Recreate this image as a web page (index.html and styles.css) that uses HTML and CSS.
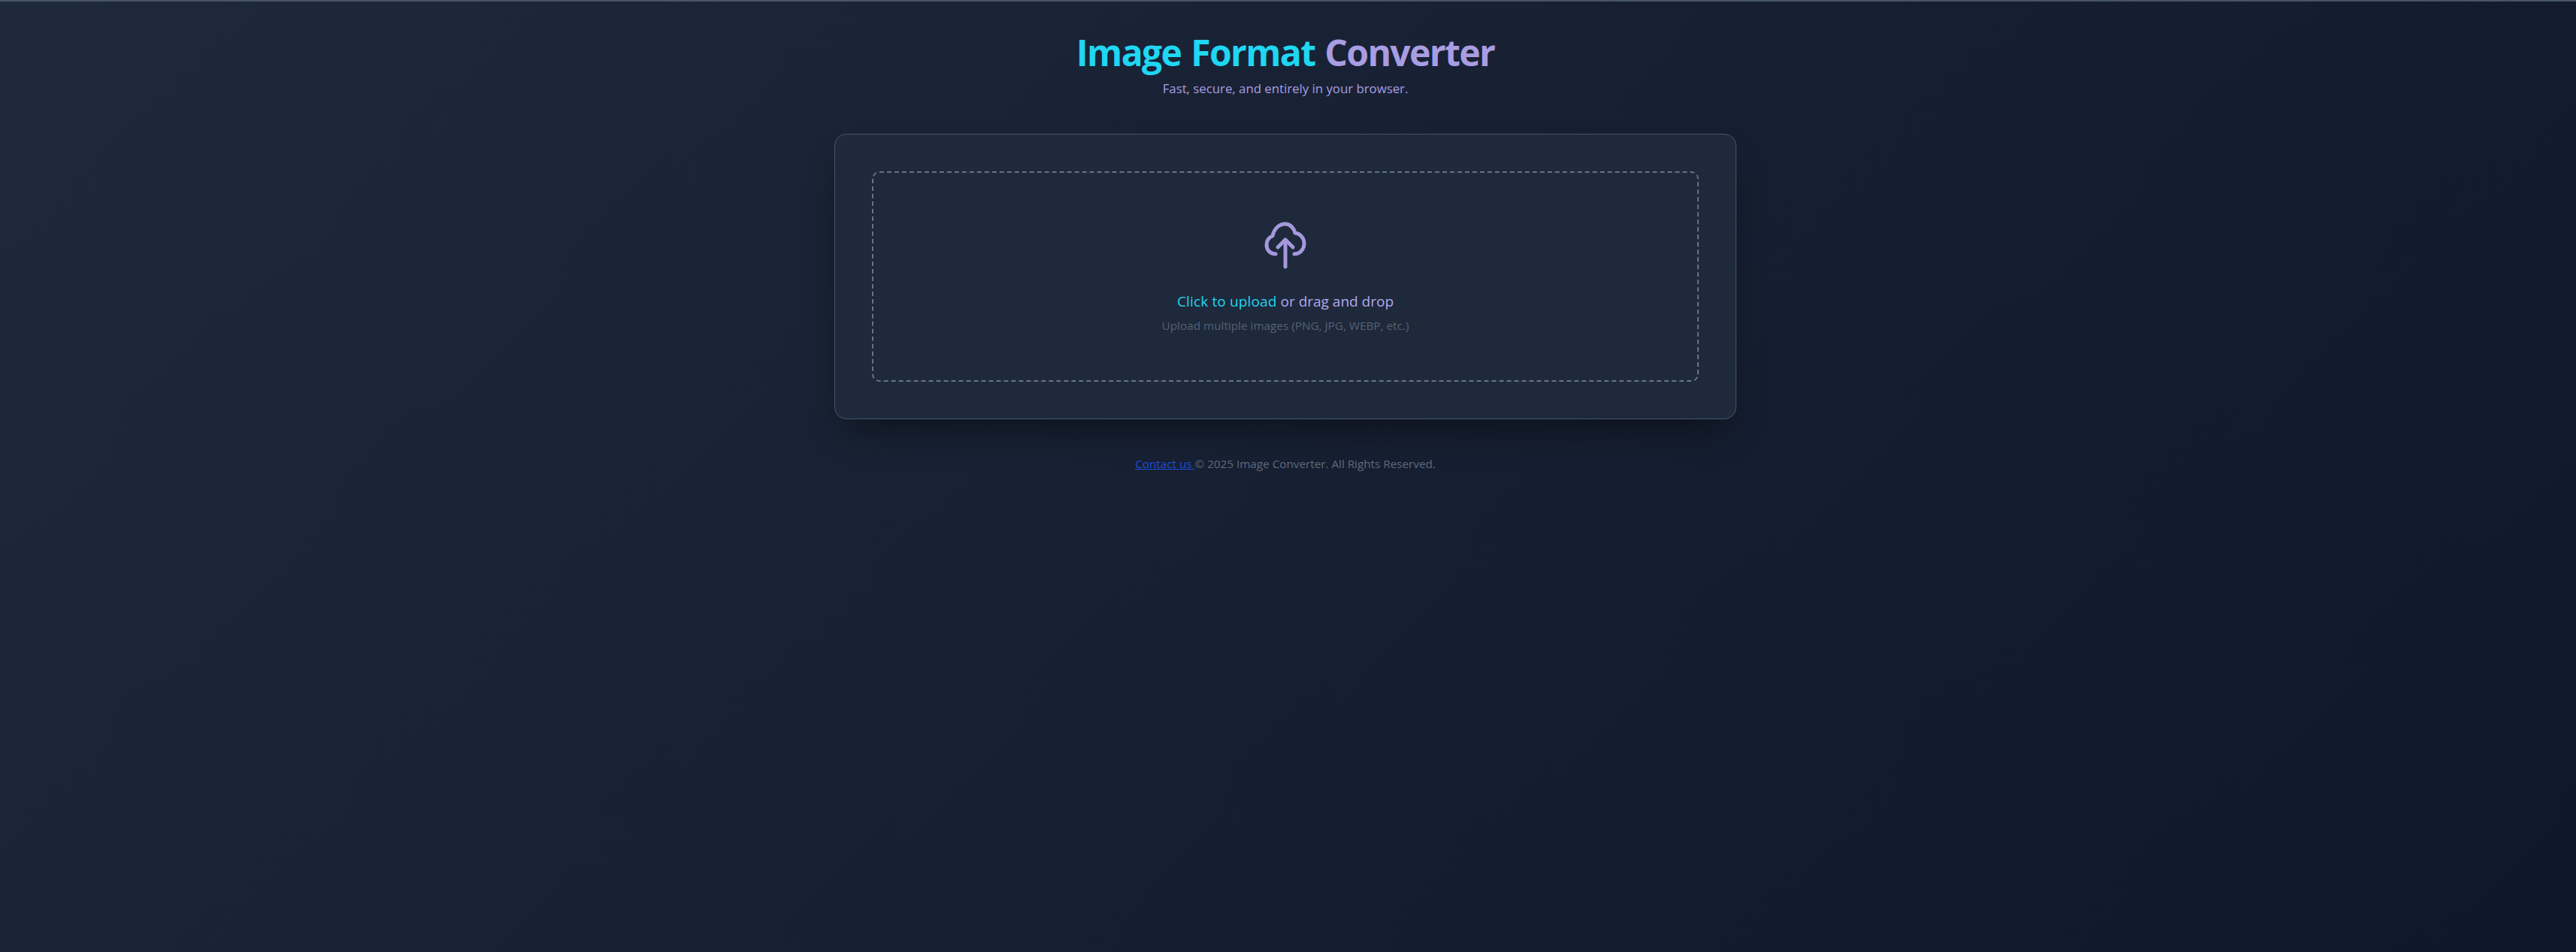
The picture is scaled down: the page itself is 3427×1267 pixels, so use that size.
FILE: index.html
```html
<!DOCTYPE html>
<html lang="en">
<head>
<meta charset="utf-8">
<title>Image Format Converter</title>
<link rel="stylesheet" href="styles.css">
</head>
<body>
<main class="page">
  <header class="header">
    <h1 class="title"><span class="title-cyan">Image Format</span> <span class="title-violet">Converter</span></h1>
    <p class="subtitle">Fast, secure, and entirely in your browser.</p>
  </header>
  <section class="card">
    <label class="dropzone">
      <svg class="upload-icon" viewBox="0 0 56 64" fill="none" stroke="currentColor" stroke-width="5" stroke-linecap="round" stroke-linejoin="round">
        <path d="M15 44C8 44 3 39 3 32C3 26 6 22 11 20C13 10 20 4 28 4C34 4 39 9 41 16C48 17 53 23 53 30C53 38 47 44 40 44"/>
        <path d="M28 61V26"/>
        <path d="M18 35 28 25 38 35"/>
      </svg>
      <p class="drop-main"><span class="drop-click">Click to upload</span> or drag and drop</p>
      <p class="drop-hint">Upload multiple images (PNG, JPG, WEBP, etc.)</p>
    </label>
  </section>
  <footer class="footer"><a class="contact" href="#">Contact us </a>© 2025 Image Converter. All Rights Reserved.</footer>
</main>
</body>
</html>
```

FILE: styles.css
```css
* { box-sizing: border-box; }
html, body { height: 100%; }
body {
  margin: 0;
  background: linear-gradient(135deg, #1e293b 0%, #0f172a 100%);
  font-family: "Open Sans", "Noto Sans", sans-serif;
  border-top: 2px solid #475569;
  overflow: hidden;
}
.page {
  display: flex;
  flex-direction: column;
  align-items: center;
  padding: 38px 7px 0 0;
}
.header { text-align: center; }
.title {
  margin: 0;
  font-size: 48px;
  line-height: 60px;
  font-weight: 700;
  letter-spacing: -1.6px;
  word-spacing: 2px;
}
.title-cyan { color: #1fd6f3; }
.title-violet { color: #a99de2; }
.subtitle {
  margin: 4px 0 0;
  font-size: 16.8px;
  line-height: 28px;
  color: #a99de2;
}
.card {
  margin-top: 46px;
  width: 1200px;
  padding: 49px;
  background: #1e293b;
  border: 1px solid #475569;
  border-radius: 16px;
  box-shadow: 0 25px 50px -12px rgba(0, 0, 0, .45);
}
.dropzone {
  display: flex;
  flex-direction: column;
  align-items: center;
  height: 280px;
  padding-top: 64px;
  border: 2px dashed #64748b;
  border-radius: 10px;
}
.upload-icon { width: 56px; height: 64px; color: #a598dc; }
.drop-main {
  margin: 29px 0 0;
  font-size: 19px;
  line-height: 28px;
  font-weight: 500;
  color: #b3a8ee;
}
.drop-click { color: #1fd6f3; letter-spacing: .15px; }
.drop-hint {
  margin: 6px 0 0;
  font-size: 15.3px;
  line-height: 24px;
  color: #556274;
}
.footer {
  margin-top: 47px;
  font-size: 15.25px;
  line-height: 24px;
  color: #5d6a7d;
}
.contact { color: #1d4ed8; }
```
